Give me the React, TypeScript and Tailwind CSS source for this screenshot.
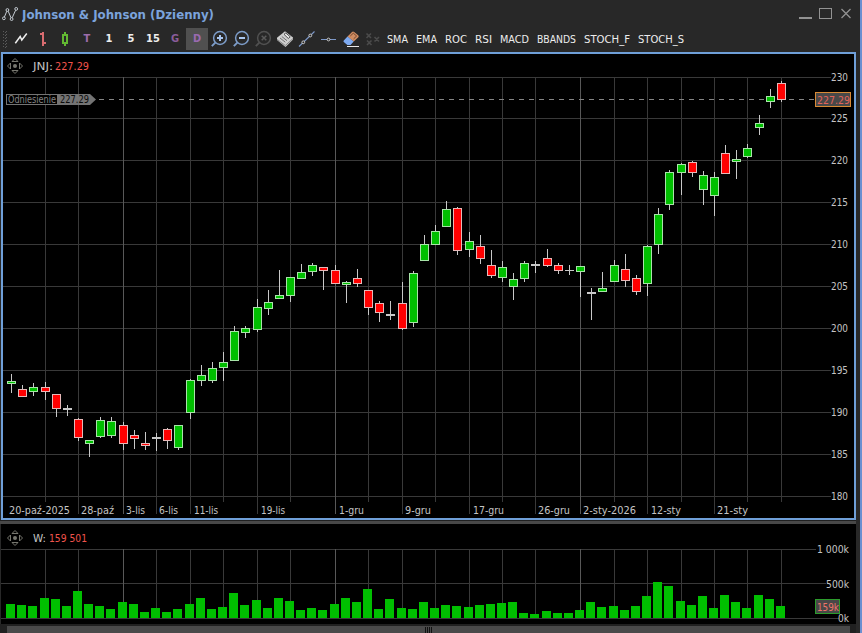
import type { ReactNode } from "react";
import { clsx } from "clsx";

type Candle = [high: number, low: number, top: number, bottom: number, kind: "g" | "r" | "n"];

// Candle extents in panel pixels: wick top, wick bottom, body top, body bottom
const CANDLES: Candle[] = [
  [374, 393, 381, 384, "g"], [385, 397, 389, 397, "r"], [383, 396, 387, 392, "g"], [382, 400, 387, 392, "r"],
  [394, 417, 394, 409, "r"], [405, 416, 408, 410, "n"], [418, 441, 419, 438, "r"], [440, 457, 440, 444, "g"],
  [417, 438, 420, 437, "g"], [417, 438, 421, 436, "g"], [422, 450, 425, 444, "r"], [430, 449, 435, 439, "r"],
  [432, 450, 443, 446, "r"], [433, 451, 437, 439, "n"], [428, 449, 429, 441, "r"], [425, 450, 425, 448, "g"],
  [379, 419, 380, 413, "g"], [365, 386, 375, 381, "g"], [362, 383, 368, 381, "g"], [352, 381, 362, 368, "g"],
  [326, 361, 331, 361, "g"], [326, 338, 328, 333, "g"], [299, 332, 307, 330, "g"], [290, 315, 302, 309, "g"],
  [270, 299, 295, 299, "g"], [277, 302, 277, 296, "g"], [264, 279, 272, 279, "g"], [263, 276, 265, 272, "g"],
  [267, 290, 267, 271, "r"], [265, 284, 270, 284, "r"], [281, 303, 282, 285, "g"], [269, 287, 278, 284, "r"],
  [290, 315, 290, 308, "r"], [301, 322, 303, 313, "r"], [301, 320, 314, 316, "n"], [282, 330, 303, 329, "r"],
  [271, 327, 273, 323, "g"], [235, 261, 244, 261, "g"], [225, 245, 231, 245, "g"], [201, 227, 209, 227, "g"],
  [207, 255, 208, 251, "r"], [232, 257, 241, 250, "g"], [235, 264, 246, 259, "r"], [250, 278, 265, 276, "r"],
  [261, 282, 267, 278, "g"], [273, 300, 279, 287, "g"], [261, 282, 263, 279, "g"], [261, 273, 264, 266, "n"],
  [249, 267, 258, 266, "r"], [263, 274, 265, 271, "r"], [265, 275, 270, 271, "n"], [266, 297, 266, 272, "g"],
  [288, 320, 292, 294, "n"], [272, 292, 288, 292, "g"], [260, 282, 265, 282, "g"], [254, 287, 269, 281, "r"],
  [275, 295, 278, 292, "r"], [245, 296, 246, 284, "g"], [208, 254, 214, 245, "g"], [170, 210, 172, 205, "g"],
  [163, 195, 164, 173, "g"], [161, 177, 162, 173, "r"], [171, 205, 175, 190, "g"], [172, 216, 177, 196, "g"],
  [145, 174, 153, 174, "r"], [150, 179, 159, 162, "g"], [144, 158, 148, 157, "g"], [115, 135, 123, 128, "g"],
  [89, 108, 96, 102, "g"], [81, 102, 83, 100, "r"],
];

const VOLUME_HEIGHTS = [
  14, 13, 12, 20, 19, 12, 27, 14, 12, 9, 16, 14, 6, 10, 6, 9, 14, 20, 9, 11, 25, 13, 18, 10, 20, 17, 8, 10, 8, 14,
  20, 16, 29, 9, 19, 10, 9, 16, 10, 13, 12, 11, 13, 14, 15, 16, 5, 4, 7, 5, 5, 8, 16, 11, 12, 8, 12, 22, 36, 32,
  17, 13, 22, 10, 23, 16, 10, 23, 19, 12,
];

const PRICES = [230, 225, 220, 215, 210, 205, 200, 195, 190, 185, 180];
const GRID_Y = [77, 118, 160, 202, 244, 286, 328, 370, 412, 454, 496];
const MONTH_STARTS = [10, 29, 51];
const GRID_BARS = [3, 6, 10, 13, 16, 19, 22, 25, 29, 32, 35, 38, 41, 44, 47, 51, 54, 57, 60, 63, 66, 69];
const LABELED_BARS = [6, 10, 13, 16, 22, 29, 35, 41, 47, 51, 57, 63];

const DATES: { x: number; w: number; label: string }[] = [
  { x: 9, w: 61, label: "20-paź-2025" },
  { x: 81, w: 33, label: "28-paź" },
  { x: 126, w: 19, label: "3-lis" },
  { x: 159, w: 19, label: "6-lis" },
  { x: 194, w: 24, label: "11-lis" },
  { x: 261, w: 24, label: "19-lis" },
  { x: 339, w: 25, label: "1-gru" },
  { x: 405, w: 26, label: "9-gru" },
  { x: 473, w: 31, label: "17-gru" },
  { x: 538, w: 32, label: "26-gru" },
  { x: 583, w: 53, label: "2-sty-2026" },
  { x: 651, w: 30, label: "12-sty" },
  { x: 717, w: 31, label: "21-sty" },
];

// w is the text width, slot the width of the whole button
const INDICATORS = [
  { label: "SMA", w: 21, slot: 29 },
  { label: "EMA", w: 21, slot: 29 },
  { label: "ROC", w: 22, slot: 30 },
  { label: "RSI", w: 17, slot: 25 },
  { label: "MACD", w: 29, slot: 37 },
  { label: "BBANDS", w: 39, slot: 47 },
  { label: "STOCH_F", w: 46, slot: 54 },
  { label: "STOCH_S", w: 46, slot: 54 },
];

const FILL = { g: "#00bf00", r: "#ff0000", n: "#c8c8c8" };
const STROKE = { g: "#a9e3a9", r: "#e6b8b8", n: "#c8c8c8" };

const barX = (i: number) => Math.floor(11.579 + 11.15711 * i);

interface LabelProps {
  x: number;
  y: number;
  w: number;
  fill?: string;
  size?: number;
  children: string;
}

function Label({ x, y, w, fill = "#c4c4c4", size = 11, children }: LabelProps) {
  return (
    <text x={x} y={y} fill={fill} fontSize={size} textLength={w} lengthAdjust="spacingAndGlyphs">
      {children}
    </text>
  );
}

function ToolButton({ active, children }: { active?: boolean; children: ReactNode }) {
  return (
    <button
      className={clsx(
        "flex h-[22px] w-[22px] shrink-0 items-center justify-center text-[11px] font-bold",
        active && "bg-[#505050]"
      )}
    >
      {children}
    </button>
  );
}

function Icon({ children }: { children: ReactNode }) {
  return (
    <svg width="22" height="22" viewBox="0 0 22 22" fill="none">
      {children}
    </svg>
  );
}

function Magnifier({ color, children }: { color: string; children: ReactNode }) {
  return (
    <Icon>
      <circle cx="12" cy="10" r="6.4" stroke={color} strokeWidth="1.5" />
      <path d="M7.3 14.7 L3.8 18.2" stroke={color} strokeWidth="1.9" />
      {children}
    </Icon>
  );
}

function MoveHandle({ y }: { y: number }) {
  return (
    <g transform={`translate(15 ${y})`} stroke="#77776f" fill="none" strokeWidth="1">
      <path d="M-3 -4.5 L0 -7.5 L3 -4.5 Z M-3 4.5 L0 7.5 L3 4.5 Z M-4.5 -3 L-7.5 0 L-4.5 3 Z M4.5 -3 L7.5 0 L4.5 3 Z" />
      <circle r="2" fill="#77776f" stroke="none" />
    </g>
  );
}

function TitleBar() {
  return (
    <header className="flex h-7 items-center justify-between pl-[2px] pr-[7px]">
      <div className="flex items-center gap-[3px]">
        <svg width="17" height="16" viewBox="0 0 17 16" fill="none" stroke="#c5ccd3" strokeWidth="1">
          <path d="M2.4 11 L4.8 5.2 M6.2 5.2 L9 11.8 M10.2 11.8 L13.6 4.2" />
          <circle cx="1.9" cy="12.3" r="1.4" />
          <circle cx="5.4" cy="4" r="1.4" />
          <circle cx="9.6" cy="13.1" r="1.4" />
          <circle cx="14.2" cy="2.9" r="1.4" />
        </svg>
        <svg width="194" height="20" className="mt-px">
          <text x="0" y="14" fill="#7ba3dc" fontSize="13" fontWeight="bold" textLength="192" lengthAdjust="spacingAndGlyphs">
            Johnson &amp; Johnson (Dzienny)
          </text>
        </svg>
      </div>
      <svg width="54" height="14" viewBox="0 0 54 14" fill="none" stroke="#929292">
        <path d="M0 11 H13" strokeWidth="2" />
        <rect x="20.5" y="1.5" width="12" height="10" />
        <path d="M42.5 2 L51.5 11 M51.5 2 L42.5 11" strokeWidth="1.3" />
      </svg>
    </header>
  );
}

function Toolbar() {
  return (
    <div className="flex h-6 items-start">
      <svg width="10" height="22" className="shrink-0">
        {[3, 6, 9, 12, 15, 18].map((y) => (
          <g key={y} fill="#5c5c5c">
            <rect x="3" y={y} width="1" height="1" />
            <rect x="6" y={y} width="1" height="1" />
            <rect x="5" y={y + 1} width="1" height="1" />
          </g>
        ))}
      </svg>
      <ToolButton>
        <Icon>
          <path d="M5.3 15.3 L10.2 8.5 L11.8 12 L16.8 5.5" stroke="#eeeeee" strokeWidth="1.5" />
        </Icon>
      </ToolButton>
      <ToolButton>
        <Icon>
          <path d="M11 4 V18 M8 6 H11 M11 15 H14" stroke="#d86c70" strokeWidth="2" />
        </Icon>
      </ToolButton>
      <ToolButton>
        <Icon>
          <path d="M11 4 V8 M11 14 V18" stroke="#62b832" strokeWidth="2" />
          <rect x="9" y="7" width="4" height="8" stroke="#62b832" strokeWidth="2" />
        </Icon>
      </ToolButton>
      <ToolButton><span className="pt-px text-[#9c6caa]">T</span></ToolButton>
      <ToolButton><span className="pt-px text-[#eeeeee]">1</span></ToolButton>
      <ToolButton><span className="pt-px text-[#eeeeee]">5</span></ToolButton>
      <ToolButton><span className="pt-px text-[#eeeeee]">15</span></ToolButton>
      <ToolButton><span className="pt-px text-[#8b5d9b]">G</span></ToolButton>
      <ToolButton active><span className="pt-px text-[#9a6ab0]">D</span></ToolButton>
      <ToolButton>
        <Magnifier color="#7c9cc8">
          <path d="M9 10 H15 M12 7 V13" stroke="#a9c6ee" strokeWidth="2" />
        </Magnifier>
      </ToolButton>
      <ToolButton>
        <Magnifier color="#7c9cc8">
          <path d="M9 10 H15" stroke="#a9c6ee" strokeWidth="2" />
        </Magnifier>
      </ToolButton>
      <ToolButton>
        <Magnifier color="#515151">
          <path d="M9.7 7.7 L14.3 12.3 M14.3 7.7 L9.7 12.3" stroke="#5a5a5a" strokeWidth="1.5" />
        </Magnifier>
      </ToolButton>
      <ToolButton>
        <Icon>
          <path d="M3 9.8 L11 3.2 L19 9.5 V11.5 L11.5 19 L3 12 Z" fill="#cfcfcf" />
          <path d="M3 11.3 L11.3 17.5 L19 10.5" stroke="#777777" strokeWidth="0.8" />
          <path d="M10 6.3 L11.8 5 L16.2 8.8 L14.3 10.5 Z" fill="#e9e9e9" stroke="#444444" strokeWidth="0.9" />
          <path d="M6 10 L11.3 14.2 M7.8 8.5 L13 12.7" stroke="#666666" strokeWidth="0.9" />
        </Icon>
      </ToolButton>
      <ToolButton>
        <Icon>
          <path d="M3 18.5 L18.5 3.5" stroke="#7d98c8" strokeWidth="1.1" />
          <circle cx="7.3" cy="14.3" r="1.4" fill="#282828" stroke="#cccccc" />
          <circle cx="14.3" cy="7.5" r="1.4" fill="#282828" stroke="#cccccc" />
        </Icon>
      </ToolButton>
      <ToolButton>
        <Icon>
          <path d="M3 11.5 H18" stroke="#7d98c8" />
          <circle cx="10.5" cy="11.5" r="1.4" fill="#282828" stroke="#cccccc" />
        </Icon>
      </ToolButton>
      <ToolButton>
        <Icon>
          <path d="M7.5 8.5 L12 4 Q13 3 14.2 4 L18.2 7.3 Q19.2 8.2 18.3 9.2 L13.7 13.6 Z" fill="#d08d62" />
          <path d="M7.5 8.5 L13.7 13.6 L10.5 17 H7.3 L3.8 14 Q3 13.2 3.8 12.4 Z" fill="#7eaaf0" />
          <path d="M10.3 8 L13.3 5.2 L16.6 8 L13.6 10.9" stroke="#6b4028" strokeWidth="0.9" />
          <path d="M7 18.5 H19" stroke="#e8e8e8" />
        </Icon>
      </ToolButton>
      <ToolButton>
        <Icon>
          <path d="M4.5 5.5 L9 10 M9 5.5 L4.5 10 M12.5 9 L17 13.5 M17 9 L12.5 13.5 M5 12.5 L9.5 17 M9.5 12.5 L5 17" stroke="#4b4b4b" strokeWidth="1.6" />
        </Icon>
      </ToolButton>
      <div className="ml-[3px] flex">
        {INDICATORS.map(({ label, w, slot }) => (
          <button key={label} className="h-[22px]">
            <svg width={slot} height="22">
              <Label x={0} y={15} w={w} fill="#ededed">{label}</Label>
            </svg>
          </button>
        ))}
      </div>
    </div>
  );
}

function PriceChart() {
  return (
    <svg width="851" height="464" viewBox="3 54 851 464" className="block">
      <g shapeRendering="crispEdges">
        {GRID_Y.map((y) => (
          <rect key={y} x="3" y={y} width="828" height="1" fill="#393939" />
        ))}
        {GRID_BARS.map((i) => (
          <rect
            key={i}
            x={barX(i)}
            y="77"
            width="1"
            height={LABELED_BARS.includes(i) ? 437 : 425}
            fill={MONTH_STARTS.includes(i) ? "#585858" : "#393939"}
          />
        ))}
        <path d="M99 99.5 H815" stroke="#858585" strokeDasharray="5 5" />
        {CANDLES.map(([high, low, top, bottom, kind], i) => {
          const x = barX(i);
          const h = bottom - top;
          return (
            <g key={i}>
              <rect x={x} y={high} width="1" height={low - high} fill="#c8c8c8" />
              <rect x={x - 4} y={top} width="9" height={h} fill={STROKE[kind]} />
              {h > 2 && <rect x={x - 3} y={top + 1} width="7" height={h - 2} fill={FILL[kind]} />}
            </g>
          );
        })}
      </g>

      {/* Legend */}
      <MoveHandle y={66} />
      <Label x={33} y={70} w={20}>JNJ:</Label>
      <Label x={55} y={70} w={34} fill="#f0544c">227.29</Label>

      {/* Reference price tag */}
      <rect x="6.5" y="94.5" width="51" height="10" fill="#000" stroke="#747474" />
      <path d="M57 94 H90 L96 99.5 L90 105 H57 Z" fill="#747474" />
      <Label x={8} y={103} w={48} size={10} fill="#858585">Odniesienie</Label>
      <Label x={60} y={103} w={29} size={10} fill="#0c0c0c">227.29</Label>

      {PRICES.map((price, i) => (
        <Label key={price} x={831} y={GRID_Y[i] + 4} w={17}>{String(price)}</Label>
      ))}
      <rect x="815.5" y="92.5" width="35" height="14" fill="#484848" stroke="#d98a35" />
      <Label x={817} y={104} w={33} fill="#e2645a">227.29</Label>

      {DATES.map(({ x, w, label }) => (
        <Label key={label} x={x} y={514} w={w}>{label}</Label>
      ))}
    </svg>
  );
}

function VolumeChart() {
  return (
    <svg width="855" height="100" viewBox="1 524 855 100" className="block bg-black">
      <g shapeRendering="crispEdges">
        <rect x="1" y="549" width="815" height="1" fill="#393939" />
        <rect x="1" y="583" width="825" height="1" fill="#393939" />
        <rect x="1" y="618" width="838" height="1" fill="#393939" />
        {GRID_BARS.map((i) => (
          <rect key={i} x={barX(i)} y="549" width="1" height="69" fill={MONTH_STARTS.includes(i) ? "#585858" : "#393939"} />
        ))}
        {VOLUME_HEIGHTS.map((h, i) => (
          <rect key={i} x={barX(i) - 5} y={618 - h} width="9" height={h} fill="#00bf00" />
        ))}
      </g>
      <MoveHandle y={538} />
      <Label x={33} y={542} w={13}>W:</Label>
      <Label x={49} y={542} w={38} fill="#f0544c">159 501</Label>
      <Label x={817} y={553} w={32}>1 000k</Label>
      <Label x={826} y={588} w={23}>500k</Label>
      <rect x="815.5" y="599.5" width="24" height="14" fill="#484848" stroke="#2c9c2c" />
      <Label x={838} y={622} w={11}>0k</Label>
      <Label x={817} y={611} w={22} fill="#ee7468">159k</Label>
    </svg>
  );
}

export default function App() {
  return (
    <div className="flex h-[633px] w-[862px] overflow-hidden bg-[#282828] font-['DejaVu_Sans_Condensed','DejaVu_Sans',sans-serif]">
      <main className="flex w-[860px] shrink-0 flex-col">
        <TitleBar />
        <Toolbar />
        <section className="ml-px w-[855px] border-2 border-[#6f9fd8] bg-black">
          <PriceChart />
        </section>
        <div className="h-1 w-[856px] border-t border-[#202020] bg-[#484848]" />
        <section className="ml-px w-[855px]">
          <VolumeChart />
        </section>
        <div className="flex h-[9px] w-[856px] bg-[#202020] pl-[7px] pt-[2px]">
          <div className="flex h-[7px] w-[843px] items-center justify-center gap-px bg-[#494949]">
            {[0, 1, 2, 3].map((i) => (
              <span key={i} className="h-[6px] w-px bg-[#111111]" />
            ))}
          </div>
        </div>
      </main>
      <div className="w-[2px] shrink-0 bg-[#6a8fd0]" />
    </div>
  );
}
